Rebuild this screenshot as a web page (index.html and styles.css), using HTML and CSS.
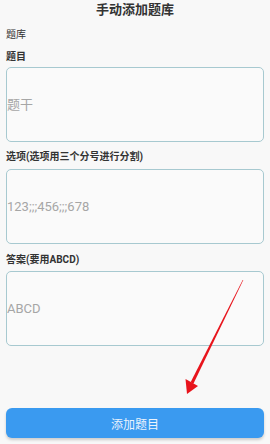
FILE: index.html
```html
<!DOCTYPE html>
<html lang="zh-CN">
<head>
    <meta charset="UTF-8">
    <meta name="viewport" content="width=device-width, initial-scale=1.0">
    <title>手动添加题库</title>
    <link rel="stylesheet" href="styles.css">
</head>
<body>
    <div class="page">
        <h1 class="title">手动添加题库</h1>
        <p class="lib">题库</p>
        <label class="lbl" for="q_stem">题目</label>
        <input type="text" class="field" id="q_stem" placeholder="题干">
        <label class="lbl lbl2" for="q_opts">选项(选项用三个分号进行分割)</label>
        <input type="text" class="field" id="q_opts" placeholder="123;;;456;;;678">
        <label class="lbl lbl3" for="q_ans">答案(要用ABCD)</label>
        <input type="text" class="field" id="q_ans" placeholder="ABCD">
        <button type="button" class="add_btn">添加题目</button>
        <!-- 标注箭头 -->
        <svg class="arrow" width="270" height="444" viewBox="0 0 270 444">
            <polygon points="243.3,280.1 242.7,279.9 190.6,382.3 193.4,383.7" fill="#e8141c"/>
            <polygon points="185.5,379 198,386 187,394" fill="#e8141c"/>
        </svg>
    </div>
</body>
</html>
```

FILE: styles.css
```css
html, body { margin:0; padding:0; background:#f8f8f8; }
body { font-family: Roboto, "Noto Sans CJK SC", sans-serif; color:#333; }
.page { position:relative; width:270px; height:444px; padding:0 6px; box-sizing:border-box; display:flex; flex-direction:column; }
.title { margin:0; height:20px; line-height:20px; font-size:13px; font-weight:bold; text-align:center; color:#333; }
.lib { margin:8px 0 0; line-height:14px; font-size:10px; }
.lbl { display:block; margin-top:8px; line-height:14px; font-size:10px; font-weight:bold; }
.lbl2 { margin-top:8px; }
.lbl3 { margin-top:9px; }
.field { display:block; box-sizing:border-box; width:100%; height:75px; margin:4px 0 0; padding:0; border:1px solid #a7c9d0; border-radius:5px; background:#fafafa; font-family: Roboto, "Noto Sans CJK SC", sans-serif; font-size:13px; color:#333; outline:none; }
#q_stem { margin-top:3px; }
#q_opts { margin-top:5px; }
.field::placeholder { color:#a6a6a6; }
.add_btn { margin-top:62px; height:30px; width:100%; border:none; border-radius:6px; background:#3a9af0; color:#eaf3fd; font-family: Roboto, "Noto Sans CJK SC", sans-serif; font-size:12px; box-shadow:0 2px 3px rgba(0,0,0,.18); }
.arrow { position:absolute; left:0; top:0; pointer-events:none; }
```
